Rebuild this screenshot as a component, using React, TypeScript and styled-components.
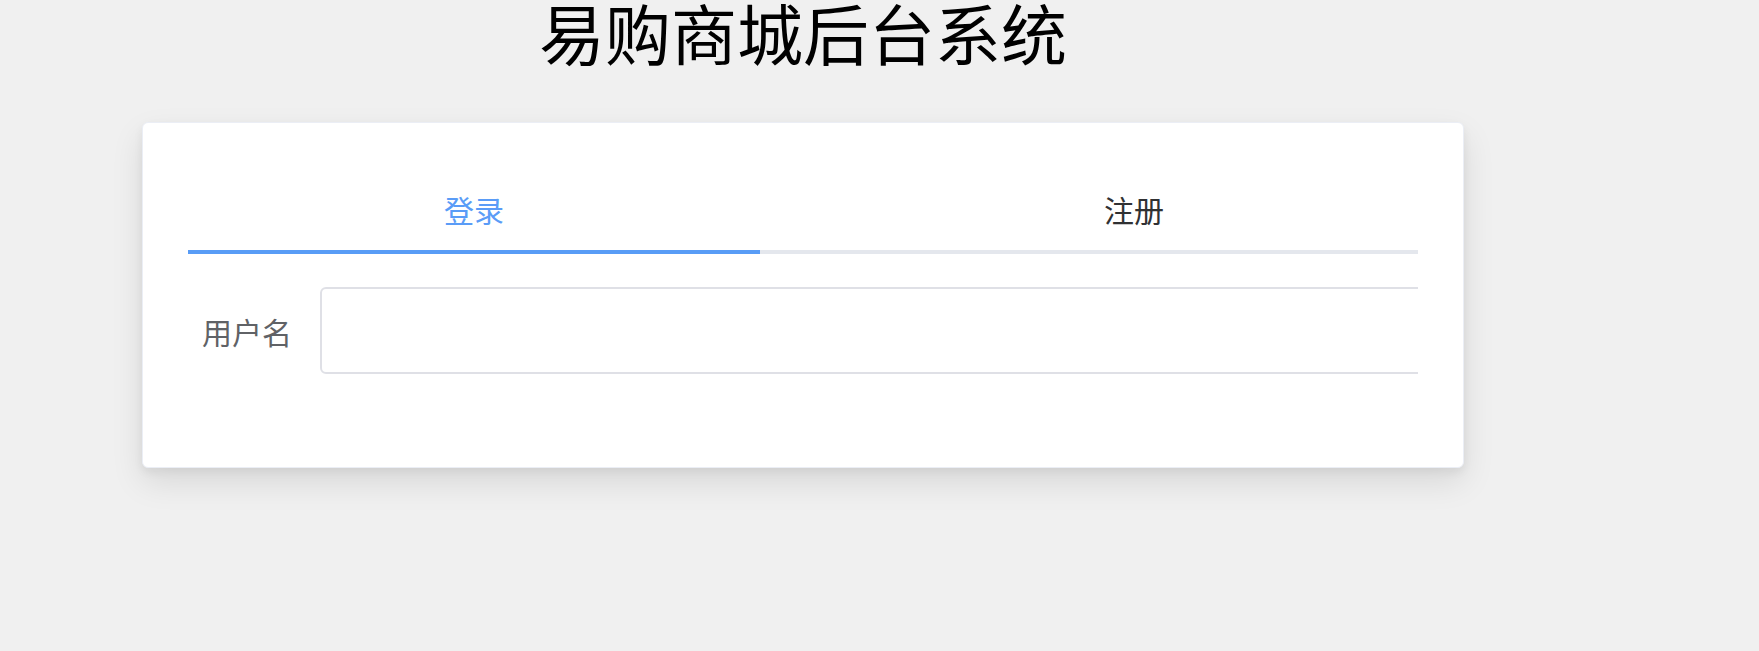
import React from "react";
import styled, { createGlobalStyle } from "styled-components";

const GlobalStyle = createGlobalStyle`
  html, body {
    margin: 0;
    padding: 0;
    background: #f0f0f0;
    font-family: "Noto Sans CJK SC", "Noto Sans", sans-serif;
  }
`;

const tabs = [
  { key: "login", label: "登录", width: 572 },
  { key: "register", label: "注册", width: 748 },
];

const App: React.FC = () => {
  return (
    <>
      <GlobalStyle />
      <Page>
        <Title>易购商城后台系统</Title>
        <Card>
          <TabsBox>
            <TabsNav>
              {tabs.map((t, i) => (
                <Tab key={t.key} $active={i === 0} $width={t.width}>
                  {t.label}
                </Tab>
              ))}
            </TabsNav>
          </TabsBox>
          <FormBox>
            <FormRow>
              <Label>用户名</Label>
              <Input type="text" />
            </FormRow>
          </FormBox>
        </Card>
      </Page>
    </>
  );
};

const Page = styled.div`
  width: 1322px;
  padding-left: 142px;
  padding-bottom: 60px;
  display: flex;
  flex-direction: column;
`;

const Title = styled.h1`
  margin: -5px 0 0;
  font-size: 66px;
  line-height: 72px;
  font-weight: 400;
  color: #000;
  text-align: center;
`;

const Card = styled.div`
  margin-top: 55px;
  box-sizing: border-box;
  height: 346px;
  background: #fff;
  border: 1px solid #ebeef5;
  border-radius: 6px;
  box-shadow: 0 4px 10px rgba(0, 0, 0, 0.06), 0 14px 32px rgba(0, 0, 0, 0.1);
  padding: 45px 45px;
  display: flex;
  flex-direction: column;
  gap: 33px;
`;

const TabsBox = styled.div`
  overflow: hidden;
`;

const TabsNav = styled.div`
  display: flex;
  width: 1320px;
  box-shadow: inset 0 -4px 0 #e4e7ed;
`;

const Tab = styled.div<{ $active?: boolean; $width: number }>`
  width: ${(p) => p.$width}px;
  height: 86px;
  box-sizing: border-box;
  padding-bottom: 4px;
  display: flex;
  align-items: center;
  justify-content: center;
  font-size: 30px;
  color: ${(p) => (p.$active ? "#5a9cf7" : "#303133")};
  box-shadow: ${(p) => (p.$active ? "inset 0 -4px 0 #589cf6" : "none")};
  cursor: pointer;
`;

const FormBox = styled.div`
  overflow: hidden;
`;

const FormRow = styled.div`
  display: flex;
  align-items: center;
  width: 1400px;
`;

const Label = styled.label`
  width: 132px;
  box-sizing: border-box;
  padding-right: 28px;
  text-align: right;
  font-size: 30px;
  color: #606266;
`;

const Input = styled.input`
  width: 1200px;
  height: 87px;
  box-sizing: border-box;
  border: 2px solid #dfe0e6;
  border-radius: 6px;
  background: #fff;
  outline: none;
  padding: 0 20px;
  font-size: 28px;
  font-family: inherit;
`;

export default App;
